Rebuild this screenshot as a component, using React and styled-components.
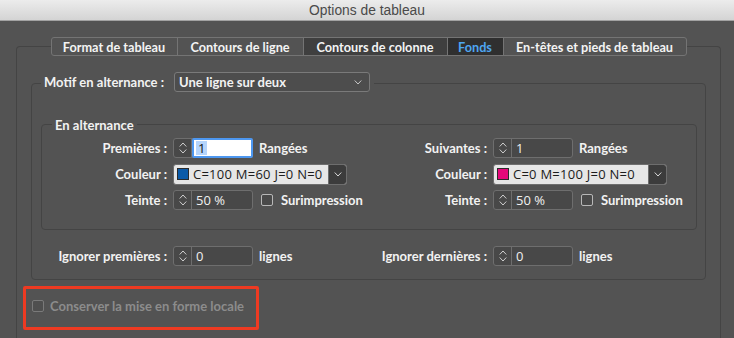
import React from 'react';
import styled, { createGlobalStyle } from 'styled-components';

const GlobalStyle = createGlobalStyle`
  html, body {
    margin: 0;
    padding: 0;
    background: #535353;
  }
  body {
    font-family: Lato, "Open Sans", sans-serif;
    overflow: hidden;
  }
`;

const Window = styled.div`
  width: 734px;
  height: 338px;
  background: #535353;
  overflow: hidden;
  display: flex;
  flex-direction: column;
`;

const TitleBar = styled.div`
  height: 20px;
  flex: none;
  border-bottom: 1px solid #a2a2a2;
  background: linear-gradient(#ececec, #d4d4d4);
  display: flex;
  align-items: center;
  justify-content: center;
  font: 13.8px "Liberation Sans", Arial, sans-serif;
  color: #4a4a4a;
`;

const OuterGroup = styled.div`
  flex: 1;
  margin: 25px 13px 0 16px;
  border: 1px solid #444;
  border-bottom: none;
  border-radius: 4px 4px 0 0;
  display: flex;
  flex-direction: column;
`;

const TabStrip = styled.div`
  align-self: center;
  margin-top: -10px;
  height: 19px;
  box-sizing: border-box;
  display: flex;
  border: 1px solid #747474;
  border-radius: 3px;
  background: #535353;
  overflow: hidden;
`;

const Tab = styled.div`
  width: ${p => p.$w}px;
  display: flex;
  align-items: center;
  justify-content: center;
  font-size: 12.7px;
  font-weight: 700;
  white-space: nowrap;
  color: ${p => (p.$active ? '#4ea6f2' : '#f4f4f4')};
  background: ${p => (p.$active ? '#2f2f2f' : p.$dim ? '#3f3f3f' : 'transparent')};
  & + & {
    border-left: 1px solid #747474;
  }
`;

const MotifGroup = styled.div`
  margin: 27px 14px 0 14px;
  border: 1px solid #444;
  border-radius: 4px;
  padding-bottom: 13px;
  display: flex;
  flex-direction: column;
`;

const MotifLegend = styled.div`
  align-self: flex-start;
  height: 20px;
  margin: -12px 0 0 9px;
  padding: 0 4px 0 3px;
  background: #535353;
  display: flex;
  align-items: center;
  gap: 10px;
`;

const AltGroup = styled.div`
  margin: 32px 8px 0 9px;
  border: 1px solid #444;
  border-radius: 4px;
  padding-bottom: 19px;
  display: flex;
  flex-direction: column;
`;

const AltLegend = styled.div`
  align-self: flex-start;
  height: 18px;
  line-height: 18px;
  margin: -9px 0 0 10px;
  padding: 0 3px;
  background: #535353;
  font-size: 13px;
  font-weight: 700;
  color: #f2f2f2;
`;

const FieldGrid = styled.div`
  margin: ${p => p.$margin || '4px 0 0 0'};
  display: grid;
  grid-template-columns: 125px 186px 122px auto;
  grid-auto-rows: 20px;
  column-gap: 6px;
  row-gap: 6px;
  align-items: center;
`;

const Label = styled.span`
  font-size: 13px;
  font-weight: 700;
  color: #f2f2f2;
  white-space: nowrap;
  text-align: ${p => (p.$right ? 'right' : 'left')};
`;

const Cell = styled.div`
  display: flex;
  align-items: center;
  gap: ${p => p.$gap || 6}px;
`;

const Select = styled.div`
  width: 196px;
  height: 20px;
  box-sizing: border-box;
  border: 1px solid #7a7a7a;
  border-radius: 3px;
  background: #4d4d4d;
  display: flex;
  align-items: center;
  justify-content: space-between;
  padding: 0 7px 0 4px;
  font-size: 13px;
  font-weight: 700;
  color: #f2f2f2;
`;

const SpinField = styled.div`
  width: 80px;
  height: 20px;
  flex: none;
  box-sizing: border-box;
  border: 1px solid #6e6e6e;
  border-radius: 3px;
  background: #484848;
  display: flex;
`;

const SpinButtons = styled.div`
  width: 17px;
  flex: none;
  border-right: 1px solid #6e6e6e;
  display: flex;
  flex-direction: column;
  align-items: center;
  justify-content: center;
  gap: 2px;
`;

const SpinInput = styled.div`
  flex: 1;
  display: flex;
  align-items: center;
  padding-left: ${p => (p.$focused ? 2 : 4)}px;
  font: 13px "Open Sans", Lato, sans-serif;
  color: ${p => (p.$focused ? '#111' : '#f0f0f0')};
  background: ${p => (p.$focused ? '#fff' : 'transparent')};
  margin: ${p => (p.$focused ? '-1px -1px -1px 0' : '0')};
  border: ${p => (p.$focused ? '2px solid #4d97f0' : 'none')};
  border-radius: ${p => (p.$focused ? '2px' : '0')};
`;

const Selected = styled.span`
  background: #b5d5fc;
  padding: 0 2px;
  line-height: 14px;
`;

const ColorSelect = styled.div`
  width: 174px;
  height: 21px;
  flex: none;
  box-sizing: border-box;
  border: 1px solid #6e6e6e;
  border-radius: 3px;
  background: #e6e6e6;
  display: flex;
  overflow: hidden;
`;

const ColorValue = styled.div`
  flex: 1;
  display: flex;
  align-items: center;
  gap: 4px;
  padding-left: 3px;
  font: 13px "Open Sans", Lato, sans-serif;
  letter-spacing: 0.25px;
  color: #1c1c1c;
  white-space: nowrap;
`;

const Swatch = styled.span`
  width: 10px;
  height: 10px;
  flex: none;
  border: 1px solid #2a2a2a;
  background: ${p => p.$color};
`;

const DropButton = styled.div`
  width: 17px;
  flex: none;
  background: #3c3c3c;
  border-left: 1px solid #6e6e6e;
  display: flex;
  align-items: center;
  justify-content: center;
`;

const CheckBox = styled.span`
  width: 10px;
  height: 10px;
  flex: none;
  border: 1px solid ${p => (p.$disabled ? '#7a7a7a' : '#b8b8b8')};
  border-radius: 2px;
  background: ${p => (p.$disabled ? '#4f4f4f' : '#4a4a4a')};
`;

const Highlight = styled.div`
  align-self: flex-start;
  width: 236px;
  height: 44px;
  box-sizing: border-box;
  margin: 6px 0 0 6px;
  border: 3px solid #ee3a22;
  border-radius: 2px;
  padding: 0 0 4px 6px;
  display: flex;
  align-items: center;
  gap: 6px;
`;

const Disabled = styled.span`
  font-size: 13px;
  font-weight: 700;
  color: #8c8c8c;
  white-space: nowrap;
`;

const Chevron = ({ up, color = '#cfcfcf' }) => (
  <svg width="8" height="5" viewBox="0 0 8 5">
    <path
      d={up ? 'M1 4.2 L4 1 L7 4.2' : 'M1 0.8 L4 4 L7 0.8'}
      fill="none"
      stroke={color}
      strokeWidth="1"
      strokeLinecap="round"
      strokeLinejoin="round"
    />
  </svg>
);

const Spin = ({ value, focused }) => (
  <SpinField>
    <SpinButtons>
      <Chevron up />
      <Chevron />
    </SpinButtons>
    <SpinInput $focused={focused}>
      {focused ? <Selected>{value}</Selected> : value}
    </SpinInput>
  </SpinField>
);

const Color = ({ swatch, text }) => (
  <ColorSelect>
    <ColorValue>
      <Swatch $color={swatch} />
      {text}
    </ColorValue>
    <DropButton>
      <Chevron color="#d8d8d8" />
    </DropButton>
  </ColorSelect>
);

const tabs = [
  { label: 'Format de tableau', w: 125 },
  { label: 'Contours de ligne', w: 125 },
  { label: 'Contours de colonne', w: 143, dim: true },
  { label: 'Fonds', w: 55, active: true },
  { label: 'En-têtes et pieds de tableau', w: 182 },
];

export default function App() {
  return (
    <Window>
      <GlobalStyle />
      <TitleBar>Options de tableau</TitleBar>
      <OuterGroup>
        <TabStrip>
          {tabs.map(t => (
            <Tab key={t.label} $w={t.w} $active={t.active} $dim={t.dim}>
              {t.label}
            </Tab>
          ))}
        </TabStrip>

        <MotifGroup>
          <MotifLegend>
            <Label>Motif en alternance :</Label>
            <Select>
              Une ligne sur deux
              <Chevron color="#c8c8c8" />
            </Select>
          </MotifLegend>

          <AltGroup>
            <AltLegend>En alternance</AltLegend>
            <FieldGrid>
              <Label $right>Premières :</Label>
              <Cell>
                <Spin value="1" focused />
                <Label>Rangées</Label>
              </Cell>
              <Label $right>Suivantes :</Label>
              <Cell>
                <Spin value="1" />
                <Label>Rangées</Label>
              </Cell>

              <Label $right>Couleur :</Label>
              <Cell>
                <Color swatch="#0a5aa8" text="C=100 M=60 J=0 N=0" />
              </Cell>
              <Label $right>Couleur :</Label>
              <Cell>
                <Color swatch="#e5077a" text="C=0 M=100 J=0 N=0" />
              </Cell>

              <Label $right>Teinte :</Label>
              <Cell $gap={8}>
                <Spin value="50 %" />
                <CheckBox />
                <Label>Surimpression</Label>
              </Cell>
              <Label $right>Teinte :</Label>
              <Cell $gap={8}>
                <Spin value="50 %" />
                <CheckBox />
                <Label>Surimpression</Label>
              </Cell>
            </FieldGrid>
          </AltGroup>

          <FieldGrid $margin="16px 0 0 10px">
            <Label $right>Ignorer premières :</Label>
            <Cell>
              <Spin value="0" />
              <Label>lignes</Label>
            </Cell>
            <Label $right>Ignorer dernières :</Label>
            <Cell>
              <Spin value="0" />
              <Label>lignes</Label>
            </Cell>
          </FieldGrid>
        </MotifGroup>

        <Highlight>
          <CheckBox $disabled />
          <Disabled>Conserver la mise en forme locale</Disabled>
        </Highlight>
      </OuterGroup>
    </Window>
  );
}
